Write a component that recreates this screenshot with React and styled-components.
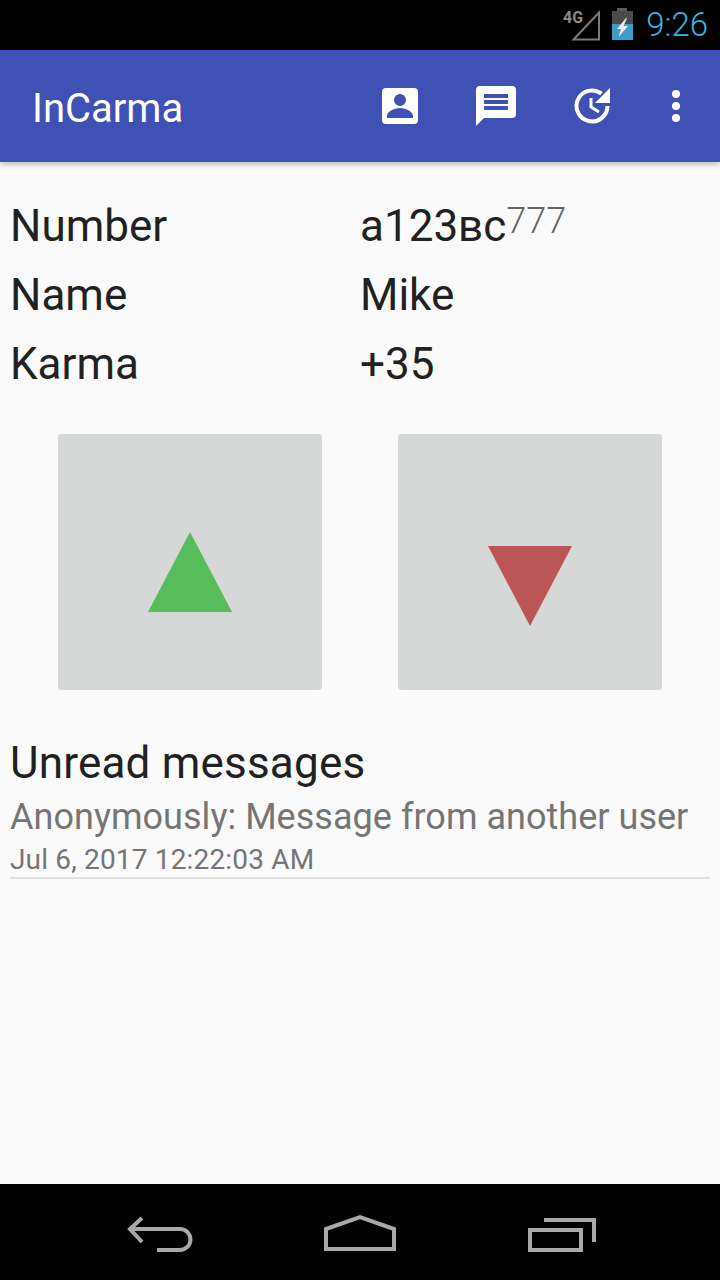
import React from "react";
import styled, { createGlobalStyle } from "styled-components";

const Global = createGlobalStyle`
  html, body { margin: 0; padding: 0; background: #fafafa; }
  body { font-family: Roboto, "Liberation Sans", sans-serif; }
`;
const Screen = styled.div`
  width: 720px; height: 1280px; display: flex; flex-direction: column; background: #fafafa; overflow: hidden;
`;
const StatusBar = styled.div`
  height: 50px; flex: none; background: #000; display: flex; align-items: center; justify-content: flex-end; padding-right: 12px; box-sizing: border-box;
`;
const StatusIcons = styled.svg`
  width: 72px; height: 50px; margin-right: 12px; flex: none;
`;
const Clock = styled.span`
  font-size: 33px; color: #33b5e5; line-height: 50px; font-weight: 300; white-space: nowrap;
`;
const Toolbar = styled.header`
  height: 112px; flex: none; background: #3f51b5; display: flex; align-items: flex-start; position: relative; z-index: 1;
  box-shadow: 0 2px 6px rgba(0,0,0,.28);
`;
const Title = styled.h1`
  margin: 0; padding: 35px 0 0 32px; font-size: 40px; line-height: 48px; font-weight: 400; color: #fff; flex: 1;
`;
const ActionSvg = styled.svg`
  position: absolute; top: 0; left: 0; width: 720px; height: 112px; pointer-events: none;
`;
const Content = styled.main`
  flex: 1; display: flex; flex-direction: column; padding: 30px 10px 0 10px; min-height: 0;
`;
const InfoRow = styled.div`
  display: grid; grid-template-columns: 350px 1fr; height: 69px; align-items: center; font-size: 44px; line-height: 69px; color: #212121;
`;
const Sup = styled.span`
  font-size: 36px; font-weight: 300; color: #666; position: relative; top: -8px; line-height: 0;
`;
const Votes = styled.div`
  display: flex; justify-content: flex-start; gap: 76px; margin: 35px 0 0 48px;
`;
const Vote = styled.button`
  width: 264px; height: 256px; padding: 0; border: 0; border-radius: 4px; background: #d6d7d7; display: flex; align-items: center; justify-content: center;
`;
const Tri = styled.svg`
  width: 84px; height: 80px; display: block; position: relative; top: ${p => p.$top}px;
`;
const Heading = styled.h2`
  margin: 46px 0 0; font-size: 44px; letter-spacing: .2px; line-height: 54px; font-weight: 400; color: #212121;
`;
const Message = styled.div`
  font-size: 36px; letter-spacing: .03px; line-height: 54px; color: #757575; white-space: nowrap;
`;
const Stamp = styled.div`
  font-size: 28px; letter-spacing: .17px; line-height: 30px; color: #757575; padding: 1px 0 2px; border-bottom: 2px solid #e0e0e0;
`;
const NavBar = styled.nav`
  height: 96px; flex: none; background: #000;
`;
const NavSvg = styled.svg`
  width: 720px; height: 96px; display: block;
`;

export default function App() {
  return (
    <Screen>
      <Global />
      <StatusBar>
        <StatusIcons viewBox="562 0 72 50">
          <text x="563" y="23" fill="#8a8a8a" fontSize="17" fontWeight="700" fontFamily="Roboto, sans-serif" textLength="20" lengthAdjust="spacingAndGlyphs">4G</text>
          <path d="M573.500 39.500 L599 12.500 V39.500 Z" fill="none" stroke="#7a7a7a" strokeWidth="2" />
          <rect x="617" y="8" width="10" height="3" fill="#5a5a5a" />
          <rect x="612" y="11" width="21" height="13" fill="#4a4a4a" />
          <rect x="612" y="24" width="21" height="16" fill="#3d9cc8" />
          <path d="M626 18 L617 29 H621 L618.500 37 L628 26 H623.500 L627 18 Z" fill="#eee" />
        </StatusIcons>
        <Clock>9:26</Clock>
      </StatusBar>
      <Toolbar>
        <Title>InCarma</Title>
        <ActionSvg viewBox="0 0 720 112">
          <path fillRule="evenodd" fill="#fff" d="M386 38h28a4 4 0 0 1 4 4v28a4 4 0 0 1-4 4h-28a4 4 0 0 1-4-4V42a4 4 0 0 1 4-4Zm14 6a6 6 0 1 0 0 12a6 6 0 0 0 0-12Zm-13 24h26v-2c0-4-6.500-8-13-8s-13 4-13 8Z" />
          <path fillRule="evenodd" fill="#fff" d="M480 36h32a4 4 0 0 1 4 4v24a4 4 0 0 1-4 4h-28l-8 8V40a4 4 0 0 1 4-4Zm4 8v4h24v-4Zm0 6v4h24v-4Zm0 6v4h24v-4Z" />
          <path fill="none" stroke="#fff" strokeWidth="4" d="M607.500 56a15.500 15.500 0 1 1-6-12.300" />
          <path fill="#fff" d="M610 38v15h-15Z" />
          <path fill="none" stroke="#fff" strokeWidth="3" d="M591 48v9l8 5" />
          <circle cx="676" cy="44" r="4" fill="#fff" />
          <circle cx="676" cy="56" r="4" fill="#fff" />
          <circle cx="676" cy="68" r="4" fill="#fff" />
        </ActionSvg>
      </Toolbar>
      <Content>
        <InfoRow><span>Number</span><span>а123вс<Sup>777</Sup></span></InfoRow>
        <InfoRow><span>Name</span><span>Mike</span></InfoRow>
        <InfoRow><span>Karma</span><span>+35</span></InfoRow>
        <Votes>
          <Vote aria-label="up"><Tri $top={10} viewBox="0 0 84 80"><path d="M42 0 84 80H0Z" fill="#57bd5a" /></Tri></Vote>
          <Vote aria-label="down"><Tri $top={24} viewBox="0 0 84 80"><path d="M0 0H84L42 80Z" fill="#bc5656" /></Tri></Vote>
        </Votes>
        <Heading>Unread messages</Heading>
        <Message>Anonymously: Message from another user</Message>
        <Stamp>Jul 6, 2017 12:22:03 AM</Stamp>
      </Content>
      <NavBar>
        <NavSvg viewBox="0 0 720 96">
          <g fill="none" stroke="#a8a8a8" strokeWidth="4">
            <path d="M142 34 L130 45 L142 58" />
            <path d="M130 45 H180 A 10.500 10.500 0 0 1 180 66 H157" />
            <path d="M326 65 V45 L360 33 L394 45 V65 Z" />
            <rect x="530" y="46" width="51" height="20" />
            <path d="M544 36 H594 V58" />
          </g>
        </NavSvg>
      </NavBar>
    </Screen>
  );
}
